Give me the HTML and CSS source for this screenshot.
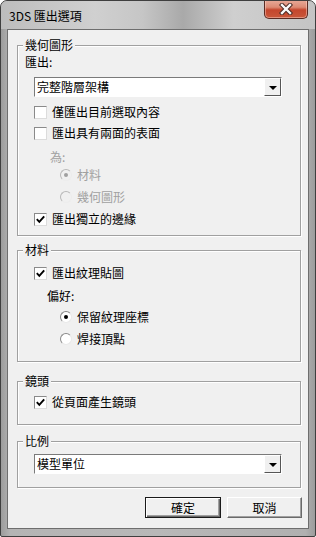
FILE: index.html
```html
<!DOCTYPE html>
<html lang="zh-Hant">
<head>
    <meta charset="UTF-8">
    <title>3DS 匯出選項</title>
    <link rel="stylesheet" href="styles.css">
</head>
<body>

<div class="window">
    <div class="titlebar">
        <span class="title">3DS 匯出選項</span>
        <div class="close">
            <svg width="14" height="12" viewBox="0 0 14 12">
                <path d="M3 2 L11 10 M11 2 L3 10" stroke="#4a2a24" stroke-width="4.4" stroke-linecap="square"/>
                <path d="M3 2 L11 10 M11 2 L3 10" stroke="#fafafa" stroke-width="2.4" stroke-linecap="square"/>
            </svg>
        </div>
    </div>

    <div class="client">
        <fieldset class="group geo">
            <legend>幾何圖形</legend>
            <div class="row label">匯出:</div>
            <div class="combo combo-geo">
                <span class="combo-text">完整階層架構</span>
                <span class="combo-btn"><span class="arrow"></span></span>
            </div>
            <div class="row check check-1"><span class="box"></span><span class="text">僅匯出目前選取內容</span></div>
            <div class="row check check-2"><span class="box"></span><span class="text">匯出具有兩面的表面</span></div>
            <div class="row label as-label disabled">為:</div>
            <div class="row radio radio-1 disabled"><span class="dot on"></span><span class="text">材料</span></div>
            <div class="row radio radio-2 disabled"><span class="dot"></span><span class="text">幾何圖形</span></div>
            <div class="row check check-3">
                <span class="box">
                    <svg width="11" height="11" viewBox="0 0 11 11"><path d="M1.8 5.2 L4.3 7.8 L9.2 2.3" fill="none" stroke="#000" stroke-width="1.9"/></svg>
                </span>
                <span class="text">匯出獨立的邊緣</span>
            </div>
        </fieldset>

        <fieldset class="group mat">
            <legend>材料</legend>
            <div class="row check check-4">
                <span class="box">
                    <svg width="11" height="11" viewBox="0 0 11 11"><path d="M1.8 5.2 L4.3 7.8 L9.2 2.3" fill="none" stroke="#000" stroke-width="1.9"/></svg>
                </span>
                <span class="text">匯出紋理貼圖</span>
            </div>
            <div class="row label pref-label">偏好:</div>
            <div class="row radio radio-3"><span class="dot on"></span><span class="text">保留紋理座標</span></div>
            <div class="row radio radio-4"><span class="dot"></span><span class="text">焊接頂點</span></div>
        </fieldset>

        <fieldset class="group cam">
            <legend>鏡頭</legend>
            <div class="row check check-5">
                <span class="box">
                    <svg width="11" height="11" viewBox="0 0 11 11"><path d="M1.8 5.2 L4.3 7.8 L9.2 2.3" fill="none" stroke="#000" stroke-width="1.9"/></svg>
                </span>
                <span class="text">從頁面產生鏡頭</span>
            </div>
        </fieldset>

        <fieldset class="group scale">
            <legend>比例</legend>
            <div class="combo combo-scale">
                <span class="combo-text">模型單位</span>
                <span class="combo-btn"><span class="arrow"></span></span>
            </div>
        </fieldset>

        <div class="buttons">
            <button class="btn btn-default">確定</button>
            <button class="btn">取消</button>
        </div>
    </div>
</div>

</body>
</html>
```

FILE: styles.css
```css
body {
    margin: 0;
    background-color: #fff;
    font-family: "Noto Sans CJK TC", "Noto Sans", sans-serif;
    font-size: 12px;
    color: #000;
}
.window {
    width: 316px;
    height: 537px;
    box-sizing: border-box;
    border: 1px solid #3f3f3f;
    border-radius: 7px 7px 2px 2px;
    padding: 0 6px 7px 6px;
    display: flex;
    flex-direction: column;
    overflow: hidden;
    background: linear-gradient(to right, #9c9c9c, #b4b4b4 3%, #b8b8b8 50%, #b0b0b0 97%, #9c9c9c);
}
.titlebar {
    height: 28px;
    margin: 0 -6px;
    padding: 0 7px 0 7px;
    display: flex;
    justify-content: space-between;
    align-items: flex-start;
    background: linear-gradient(to right, #bdbdbd 0%, #d0d0d0 30%, #c6c6c6 45%, #a9a9a9 58%, #cfcfcf 74%, #c4c4c4 100%);
}
.title {
    line-height: 29px;
    padding-left: 1px;
    color: #000;
}
.close {
    width: 44px;
    height: 19px;
    margin-top: -1px;
    box-sizing: border-box;
    border: 1px solid #5a2b23;
    border-top: none;
    border-radius: 0 0 5px 5px;
    background: linear-gradient(#e7ab9a 0%, #dc8a74 40%, #c4462d 55%, #c9573a 100%);
    box-shadow: inset 0 0 0 1px rgba(255, 220, 210, 0.45);
    display: flex;
    align-items: center;
    justify-content: center;
}
.client {
    flex: 1;
    background-color: #f0f0f0;
    border: 1px solid #6e6e6e;
    display: flex;
    flex-direction: column;
}
.group {
    margin: 0 7px 0 9px;
    padding: 1px 0 0 0;
    min-width: 0;
    border: 1px solid #a0a0a0;
    box-shadow: inset 1px 1px 0 #fff, 1px 1px 0 #fff;
    display: flex;
    flex-direction: column;
    align-items: flex-start;
}
.group legend {
    margin-left: 5px;
    padding: 0 2px;
    line-height: 16px;
    background-color: #f0f0f0;
}
.geo { margin-top: 7px; padding-bottom: 8px; }
.mat { margin-top: 6px; padding-bottom: 14px; }
.cam { margin-top: 11px; padding-bottom: 14px; }
.scale { margin-top: 8px; padding-bottom: 13px; }

.row {
    height: 16px;
    line-height: 16px;
    display: flex;
    align-items: center;
}
.label { margin-left: 7px; }
.disabled { color: #a0a0a0; }

.check-1 { margin-top: 7px; }
.check-2 { margin-top: 5px; }
.as-label { margin-left: 32px; margin-top: 8px; }
.radio-1 { margin-top: 2px; }
.radio-2 { margin-top: 6px; }
.check-3 { margin-top: 6px; }
.check-4 { margin-top: 6px; }
.pref-label { margin-left: 29px; margin-top: 7px; }
.radio-3 { margin-top: 5px; }
.radio-4 { margin-top: 6px; }
.check-5 { margin-top: 4px; }

.check .box {
    margin-left: 16px;
    width: 13px;
    height: 13px;
    box-sizing: border-box;
    border: 1px solid;
    border-color: #8a8a8a #dcdcdc #dcdcdc #8a8a8a;
    background-color: #fff;
    display: flex;
    align-items: center;
    justify-content: center;
}
.check .text { margin-left: 5px; }

.radio .dot {
    margin-left: 42px;
    width: 12px;
    height: 12px;
    box-sizing: border-box;
    border-radius: 50%;
    border: 1px solid;
    border-color: #8a8a8a #e8e8e8 #e8e8e8 #8a8a8a;
    background-color: #fff;
    display: flex;
    align-items: center;
    justify-content: center;
}
.radio .dot.on::after {
    content: "";
    width: 4px;
    height: 4px;
    border-radius: 50%;
    background-color: #000;
}
.radio.disabled .dot {
    border-color: #b8b8b8 #ececec #ececec #b8b8b8;
    background-color: #f0f0f0;
}
.radio.disabled .dot.on::after { background-color: #a0a0a0; }
.radio .text { margin-left: 5px; }

.combo {
    margin-left: 16px;
    width: 248px;
    height: 20px;
    box-sizing: border-box;
    border: 1px solid;
    border-color: #7a7a7a #fff #fff #7a7a7a;
    background-color: #fff;
    display: flex;
    align-items: center;
    justify-content: space-between;
}
.combo-geo { margin-top: 7px; }
.combo-scale { margin-top: 4px; }
.combo-text {
    padding-left: 2px;
    line-height: 16px;
}
.combo-btn {
    width: 17px;
    height: 18px;
    box-sizing: border-box;
    border: 1px solid;
    border-color: #fff #555 #555 #fff;
    background-color: #f0f0f0;
    display: flex;
    align-items: center;
    justify-content: center;
}
.arrow {
    width: 0;
    height: 0;
    border-left: 4px solid transparent;
    border-right: 4px solid transparent;
    border-top: 4px solid #000;
    margin-top: 1px;
}

.buttons {
    margin-top: 9px;
    margin-right: 6px;
    display: flex;
    justify-content: flex-end;
    gap: 6px;
}
.btn {
    width: 75px;
    height: 21px;
    box-sizing: border-box;
    padding: 0;
    font-family: inherit;
    font-size: 12px;
    color: #000;
    background-color: #f0f0f0;
    border: 1px solid;
    border-color: #fff #6a6a6a #6a6a6a #fff;
    box-shadow: inset -1px -1px 0 #a0a0a0;
}
.btn-default {
    width: 76px;
    border: 1px solid #1a1a1a;
    box-shadow: inset 1px 1px 0 #fff, inset -1px -1px 0 #6a6a6a, inset -2px -2px 0 #a0a0a0;
}
```
